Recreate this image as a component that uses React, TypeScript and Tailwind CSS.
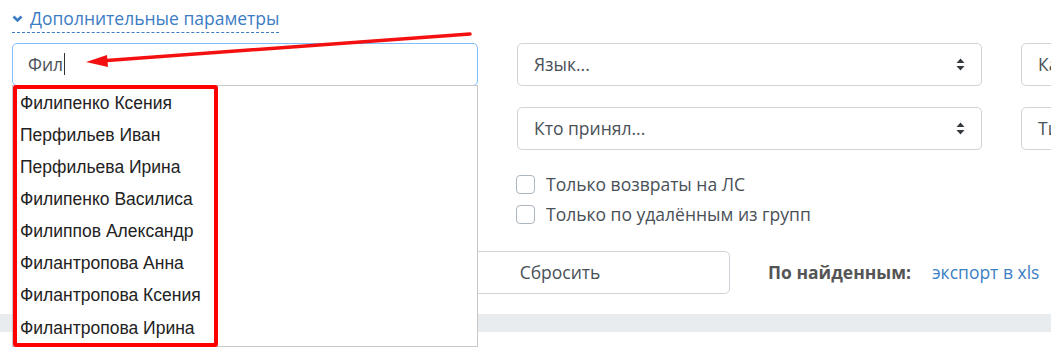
import React from 'react';

const names = [
  'Филипенко Ксения',
  'Перфильев Иван',
  'Перфильева Ирина',
  'Филипенко Василиса',
  'Филиппов Александр',
  'Филантропова Анна',
  'Филантропова Ксения',
  'Филантропова Ирина',
];

const SortIcon = () => (
  <svg width="9" height="13" viewBox="0 0 9 13" className="shrink-0">
    <path d="M4.5 0.5 L8.5 5 L0.5 5 Z" fill="#343a40" />
    <path d="M4.5 12.5 L8.5 8 L0.5 8 Z" fill="#343a40" />
  </svg>
);

const Select = ({ label }: { label: string }) => (
  <div className="h-[43px] rounded-[5px] border border-[#ced4da] bg-white flex items-center justify-between pl-4 pr-4 text-[17.5px] text-[#495057]">
    <span>{label}</span>
    <SortIcon />
  </div>
);

const Checkbox = ({ label }: { label: string }) => (
  <label className="flex items-center gap-[11px] h-[30px] text-[17.5px] text-[#495057]">
    <span className="w-[19px] h-[19px] rounded-[4px] border border-[#adb5bd] bg-white" />
    {label}
  </label>
);

export default function App() {
  return (
    <div className="relative w-[1051px] h-[361px] overflow-hidden bg-white font-['Open_Sans',sans-serif]">
      <div className="pl-3 pt-[5px]">
        <div className="inline-flex items-center gap-[7px] h-[26px] border-b border-dashed border-[#3b7cc4] text-[17.5px] text-[#3b7cc4] leading-none">
          <svg width="11" height="8" viewBox="0 0 11 8">
            <path d="M1.5 1.5 L5.5 5.5 L9.5 1.5" stroke="#3b7cc4" strokeWidth="2.6" fill="none" />
          </svg>
          <span>Дополнительные параметры</span>
        </div>
      </div>

      <div className="pl-3 mt-[10px] grid grid-cols-[466px_465px_466px] gap-x-[39px] gap-y-[21px]">
        <div className="h-[43px] rounded-[5px] border border-[#80bdff] bg-white flex items-center pl-[15px] text-[17.5px] text-[#495057]">
          Фил<span className="w-px h-[22px] bg-[#333] ml-px" />
        </div>
        <Select label="Язык..." />
        <div className="h-[43px] rounded-[5px] border border-[#ced4da] flex items-center pl-4 text-[17.5px] text-[#495057]">
          Канал...
        </div>

        <div className="h-[43px] rounded-[5px] border border-[#ced4da]" />
        <Select label="Кто принял..." />
        <div className="h-[43px] rounded-[5px] border border-[#ced4da] flex items-center pl-4 text-[17.5px] text-[#495057]">
          Тип...
        </div>
      </div>

      <div className="pl-[516px] mt-[20px]">
        <Checkbox label="Только возвраты на ЛС" />
        <Checkbox label="Только по удалённым из групп" />
      </div>

      <div className="flex items-center mt-[21px] pl-[390px]">
        <div className="w-[340px] h-[43px] rounded-[5px] border border-[#ced4da] flex items-center justify-center text-[17.5px] text-[#495057]">
          Сбросить
        </div>
        <span className="ml-[38px] font-bold text-[17.5px] text-[#555]">По найденным:</span>
        <span className="ml-[21px] text-[17.5px] text-[#3d80c4]">экспорт в xls</span>
      </div>

      <div className="mt-[20px] h-[18px] bg-[#e9ecef]" />

      <div className="absolute left-3 top-[85px] w-[466px] h-[262px] border border-[#c8c8c8] bg-white pt-[1px] font-['Liberation_Sans',Arial,sans-serif] text-[17.5px] text-[#222]">
        {names.map((n) => (
          <div key={n} className="h-[32.1px] flex items-center pl-[7px]">
            {n}
          </div>
        ))}
      </div>
      <div className="absolute left-[13px] top-[85px] w-[205px] h-[262px] border-[4px] border-[#ff0000] rounded-[3px]" />

      <svg className="absolute left-0 top-0" width="1051" height="361">
        <line x1="470" y1="34" x2="100" y2="61" stroke="#f41010" strokeWidth="3.5" strokeLinecap="round" />
        <path d="M86 62 L107 55 L108 67 Z" fill="#f41010" />
      </svg>
    </div>
  );
}
